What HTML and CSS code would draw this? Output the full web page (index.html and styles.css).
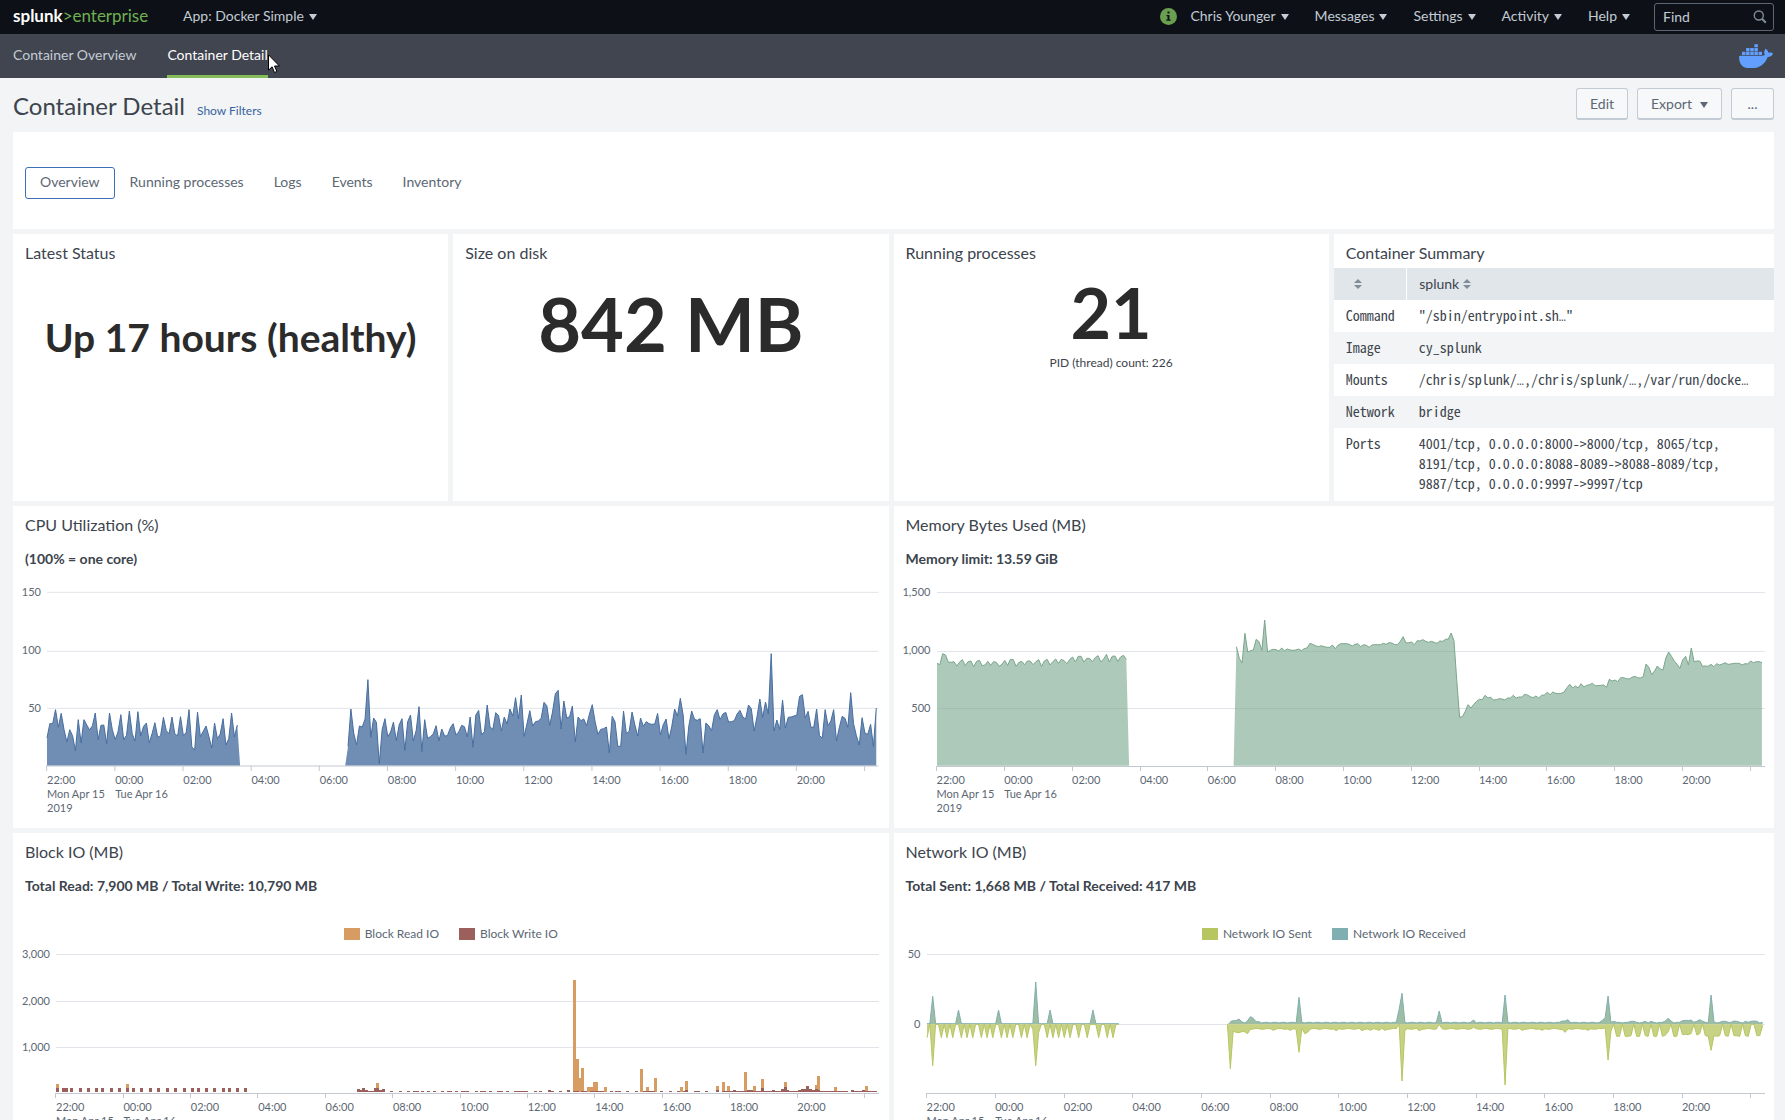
FILE: index.html
```html
<!DOCTYPE html>
<html lang="en">
<head>
<meta charset="utf-8">
<title>Container Detail</title>
<meta name="viewport" content="width=device-width, initial-scale=1">
<link rel="stylesheet" href="styles.css">
</head>
<body>
<header class="topbar">
  <a class="logo" href="#"><span class="logo-brand">splunk</span><span class="logo-product">&gt;enterprise</span></a>
  <button class="menu" type="button">App: Docker Simple<i class="caret"></i></button>
  <div class="topbar-right">
    <svg class="info" viewBox="0 0 17 17" aria-hidden="true"><circle cx="8.500" cy="8.500" r="8.500" fill="#6a9f50"/><path d="M7.500 3.500h2v2h-2zM6.500 7h3v4.500h1.200v1.200H6.300v-1.200h1.200V8.200h-1z" fill="#0d1117"/></svg>
    <button class="menu" type="button">Chris Younger<i class="caret"></i></button>
    <button class="menu" type="button">Messages<i class="caret"></i></button>
    <button class="menu" type="button">Settings<i class="caret"></i></button>
    <button class="menu" type="button">Activity<i class="caret"></i></button>
    <button class="menu" type="button">Help<i class="caret"></i></button>
    <div class="find">
      <input class="find-input" type="text" placeholder="Find" aria-label="Find">
      <svg class="find-icon" viewBox="0 0 14 14" aria-hidden="true"><circle cx="5.800" cy="5.500" r="4.500" fill="none" stroke="#818d99" stroke-width="1.400"/><path d="M9 8.800l3.800 4" stroke="#818d99" stroke-width="2"/></svg>
    </div>
  </div>
</header>
<nav class="appnav">
  <a class="appnav-link" href="#">Container Overview</a>
  <a class="appnav-link active" href="#" aria-current="page">Container Detail
    <svg class="pointer" viewBox="0 0 12 20" aria-hidden="true"><path d="M.5.8v15.400l3.600-3.400 2.400 5.700 2.400-1-2.400-5.500h4.900z" fill="#fff" stroke="#000"/></svg>
  </a>
  <svg class="docker" viewBox="0 3.300 24 17" role="img" aria-label="Docker"><path fill="#639fff" d="M13.983 11.078h2.119a.186.186 0 00.186-.185V9.006a.186.186 0 00-.186-.186h-2.119a.185.185 0 00-.185.185v1.888c0 .102.083.185.185.185m-2.954-5.430h2.118a.186.186 0 00.186-.186V3.574a.186.186 0 00-.186-.185h-2.118a.185.185 0 00-.185.185v1.888c0 .102.082.185.185.185m0 2.716h2.118a.187.187 0 00.186-.186V6.290a.186.186 0 00-.186-.185h-2.118a.185.185 0 00-.185.185v1.887c0 .102.082.185.185.186m-2.930 0h2.120a.186.186 0 00.184-.186V6.290a.185.185 0 00-.185-.185H8.100a.185.185 0 00-.185.185v1.887c0 .102.083.185.185.186m-2.964 0h2.119a.186.186 0 00.185-.186V6.290a.185.185 0 00-.185-.185H5.136a.186.186 0 00-.186.185v1.887c0 .102.084.185.186.186m5.893 2.715h2.118a.186.186 0 00.186-.185V9.006a.186.186 0 00-.186-.186h-2.118a.185.185 0 00-.185.185v1.888c0 .102.082.185.185.185m-2.930 0h2.120a.185.185 0 00.184-.185V9.006a.185.185 0 00-.184-.186h-2.120a.185.185 0 00-.184.185v1.888c0 .102.083.185.185.185m-2.964 0h2.119a.185.185 0 00.185-.185V9.006a.185.185 0 00-.184-.186h-2.120a.186.186 0 00-.186.186v1.887c0 .102.084.185.186.185m-2.920 0h2.120a.185.185 0 00.184-.185V9.006a.185.185 0 00-.184-.186h-2.120a.185.185 0 00-.184.185v1.888c0 .102.082.185.185.185M23.763 9.890c-.065-.051-.672-.510-1.954-.510-.338.001-.676.030-1.010.087-.248-1.700-1.653-2.530-1.716-2.566l-.344-.199-.226.327c-.284.438-.490.922-.612 1.430-.230.970-.090 1.882.403 2.661-.595.332-1.550.413-1.744.420H.751a.751.751 0 00-.750.748 11.376 11.376 0 00.692 4.062c.545 1.428 1.355 2.480 2.410 3.124 1.180.723 3.100 1.137 5.275 1.137.983.003 1.963-.086 2.930-.266a12.248 12.248 0 003.823-1.389c.980-.567 1.860-1.288 2.610-2.136 1.252-1.418 1.998-2.997 2.553-4.400h.221c1.372 0 2.215-.549 2.680-1.009.309-.293.550-.650.707-1.046l.098-.288Z"/></svg>
</nav>
<main class="dashboard">
  <div class="dash-head">
    <h1 class="dash-title">Container Detail</h1>
    <a class="filters" href="#">Show Filters</a>
    <div class="dash-actions">
      <button class="btn" type="button">Edit</button>
      <button class="btn" type="button">Export<i class="caret"></i></button>
      <button class="btn" type="button">...</button>
    </div>
  </div>

  <section class="panel tabs">
    <button class="tab selected" type="button">Overview</button>
    <button class="tab" type="button">Running processes</button>
    <button class="tab" type="button">Logs</button>
    <button class="tab" type="button">Events</button>
    <button class="tab" type="button">Inventory</button>
  </section>

  <div class="row quarters">
    <section class="panel">
      <h2 class="panel-title">Latest Status</h2>
      <p class="single single-status">Up 17 hours (healthy)</p>
    </section>
    <section class="panel">
      <h2 class="panel-title">Size on disk</h2>
      <p class="single single-size">842 MB</p>
    </section>
    <section class="panel">
      <h2 class="panel-title">Running processes</h2>
      <p class="single single-count">21</p>
      <p class="single-note">PID (thread) count: 226</p>
    </section>
    <section class="panel">
      <h2 class="panel-title">Container Summary</h2>
      <table class="summary">
        <thead><tr>
          <th class="summary-key" scope="col"><svg class="sort" viewBox="0 0 8 10" aria-label="Sort"><path d="M4 0l4 4H0zM4 10l4-4H0z" fill="#818d99"/></svg></th>
          <th scope="col">splunk <svg class="sort" viewBox="0 0 8 10" aria-hidden="true"><path d="M4 0l4 4H0zM4 10l4-4H0z" fill="#818d99"/></svg></th>
        </tr></thead>
        <tbody>
          <tr><td>Command</td><td>"/sbin/entrypoint.sh<span class="more">…</span>"</td></tr>
          <tr><td>Image</td><td>cy_splunk</td></tr>
          <tr><td>Mounts</td><td>/chris/splunk/<span class="more">…</span>,/chris/splunk/<span class="more">…</span>,/var/run/docke<span class="more">…</span></td></tr>
          <tr><td>Network</td><td>bridge</td></tr>
          <tr><td>Ports</td><td>4001/tcp, 0.0.0.0:8000-&gt;8000/tcp, 8065/tcp, 8191/tcp, 0.0.0.0:8088-8089-&gt;8088-8089/tcp, 9887/tcp, 0.0.0.0:9997-&gt;9997/tcp</td></tr>
        </tbody>
      </table>
    </section>
  </div>

  <div class="row halves">
    <section class="panel">
      <h2 class="panel-title">CPU Utilization (%)</h2>
      <p class="panel-sub">(100% = one core)</p>
      <div class="chart chart-area" data-chart="cpu">
        <div class="y-axis"><span>150</span><span>100</span><span>50</span></div>
      </div>
    </section>
    <section class="panel">
      <h2 class="panel-title">Memory Bytes Used (MB)</h2>
      <p class="panel-sub">Memory limit: 13.59 GiB</p>
      <div class="chart chart-area chart-memory" data-chart="memory">
        <div class="y-axis"><span>1,500</span><span>1,000</span><span>500</span></div>
      </div>
    </section>
  </div>

  <div class="row halves">
    <section class="panel">
      <h2 class="panel-title">Block IO (MB)</h2>
      <p class="panel-sub">Total Read: 7,900 MB / Total Write: 10,790 MB</p>
      <ul class="legend"><li class="key-read">Block Read IO</li><li class="key-write">Block Write IO</li></ul>
      <div class="chart chart-io chart-block" data-chart="block">
        <div class="y-axis"><span>3,000</span><span>2,000</span><span>1,000</span></div>
      </div>
    </section>
    <section class="panel">
      <h2 class="panel-title">Network IO (MB)</h2>
      <p class="panel-sub">Total Sent: 1,668 MB / Total Received: 417 MB</p>
      <ul class="legend"><li class="key-sent">Network IO Sent</li><li class="key-received">Network IO Received</li></ul>
      <div class="chart chart-io chart-network" data-chart="network">
        <div class="y-axis"><span>50</span><span>0</span></div>
      </div>
    </section>
  </div>
</main>
<script src="charts.js"></script>
</body>
</html>
```
FILE: styles.css
```css
* { box-sizing: border-box; }

html, body { height: 100%; }

body {
  margin: 0;
  display: flex;
  flex-direction: column;
  background: #f2f4f5;
  color: #3c444d;
  font: 14px/20px Lato, "Open Sans", sans-serif;
}

button, input { font: inherit; }
h1, h2, p, ul { margin: 0; padding: 0; font-weight: 400; }
a { text-decoration: none; }

.caret {
  display: inline-block;
  margin-left: 5px;
  border: 4px solid transparent;
  border-top: 6px solid currentColor;
  border-bottom: 0;
  vertical-align: 1px;
}

/* Splunk bar */
.topbar {
  flex: none;
  height: 34px;
  display: flex;
  align-items: center;
  padding: 0 11px 2px 13px;
  background: #0d1117;
}
.logo { width: 157px; font-size: 17px; white-space: nowrap; }
.logo-brand { color: #fff; font-weight: 700; }
.logo-product { color: #70b050; }
.menu {
  padding: 0 13px;
  border: 0;
  background: none;
  color: #c3cbd4;
}
.topbar-right { margin-left: auto; display: flex; align-items: center; }
.info { width: 17px; height: 17px; }
.find {
  width: 120px;
  height: 28px;
  margin: 2px 0 0 11px;
  padding: 0 6px 0 8px;
  display: flex;
  align-items: center;
  border: 1px solid #5c6773;
  border-radius: 3px;
}
.find-input {
  flex: 1;
  min-width: 0;
  padding: 0;
  border: 0;
  outline: 0;
  background: none;
  color: #c3cbd4;
}
.find-input::placeholder { color: #c3cbd4; opacity: 1; }
.find-icon { width: 14px; height: 14px; }

/* App navigation */
.appnav {
  flex: none;
  height: 44px;
  display: flex;
  align-items: center;
  gap: 31px;
  padding: 0 12px 0 13px;
  background: #41454f;
}
.appnav-link {
  position: relative;
  height: 44px;
  padding-top: 11px;
  color: #c3cbd4;
}
.appnav-link.active { color: #fff; border-bottom: 3px solid #84bd5a; }
.pointer { position: absolute; left: 100%; top: 20px; width: 12px; height: 20px; }
.docker { width: 34px; height: 24px; margin-left: auto; }

/* Dashboard */
.dashboard {
  flex: 1;
  min-height: 0;
  overflow-y: auto;
  scrollbar-width: none;
  padding: 10px 11px 20px 13px;
}
.dash-head { display: flex; align-items: flex-start; height: 44px; }
.dash-title { font-size: 24px; line-height: 36px; }
.filters { margin-left: 12px; padding-top: 14px; color: #3863a0; font-size: 12px; line-height: 18px; }
.dash-actions { margin-left: auto; display: flex; gap: 9px; }
.btn {
  height: 32px;
  min-width: 43px;
  padding: 0 13px;
  border: 1px solid #c3cbd4;
  border-bottom-width: 2px;
  border-radius: 3px;
  background: #f7f8fa;
  color: #5c6773;
}
.btn .caret { margin-left: 8px; }

.panel { background: #fff; min-width: 0; }
.tabs { display: flex; align-items: center; height: 97px; padding: 5px 12px 0; }
.tab {
  height: 32px;
  padding: 0 14px 2px;
  border: 1px solid transparent;
  border-radius: 3px;
  background: none;
  color: #5c6773;
}
.tab.selected { border-color: #3c6fb5; }

.row { display: flex; margin-top: 5px; gap: 5px; }
.quarters .panel { flex: 0 0 calc(25% - 5px); height: 267px; }
.halves .panel { flex: 0 0 calc(50% - 5px); height: 322px; }
.row .panel:last-child { flex: 1; }
.panel-title { padding: 9px 12px 5px; font-size: 16px; line-height: 20px; }
.panel-sub { padding: 9px 12px 0; font-weight: 700; line-height: 20px; }

.single { text-align: center; font-weight: 700; color: #2b2b2b; white-space: nowrap; }
.single-status { padding-top: 45px; font-size: 39px; line-height: 48px; }
.single-size { padding-top: 16px; font-size: 74px; line-height: 80px; }
.single-count { padding-top: 4px; font-size: 70px; line-height: 80px; }
.single-note { padding-top: 2px; text-align: center; font-size: 12px; line-height: 18px; }

.summary { width: 100%; border-collapse: collapse; table-layout: fixed; }
.summary th {
  height: 32px;
  padding: 0 12px 1px;
  background: #e1e6eb;
  font-weight: 400;
  text-align: left;
}
.summary .summary-key { width: 73px; padding-left: 20px; border-right: 1px solid #fff; }
.summary td {
  padding: 5px 12px 7px;
  font: 14px/20px "Noto Sans Mono CJK SC", "Liberation Mono", monospace;
  vertical-align: top;
}
.summary tbody tr:nth-child(even) { background: #f2f4f5; }
.more { font: 12px/1 "Liberation Mono", monospace; }
.sort { width: 8px; height: 10px; }

/* Charts: labels in the left column, plot and time axis in the right one */
.chart {
  display: grid;
  grid-template-columns: 22px 1fr;
  padding: 0 10px 0 6px;
  column-gap: 6px;
  color: #5c6773;
  font-size: 11px;
  line-height: 14px;
}
.chart-area { padding-top: 16px; }
.y-axis {
  display: flex;
  flex-direction: column;
  justify-content: space-between;
  text-align: right;
  white-space: nowrap;
}
.chart-area .y-axis { height: 130px; }
.chart-io .y-axis { height: 107px; }
.chart-network .y-axis { height: 84px; }
.chart-memory, .chart-block { grid-template-columns: 31px 1fr; }
.chart-network { grid-template-columns: 21px 1fr; }
.plot { display: block; width: 100%; margin-top: 7px; overflow: visible; }
.chart-area .plot { height: 179px; }
.chart-io .plot { height: 144px; }
.plot path, .plot line { vector-effect: non-scaling-stroke; }
.x-axis { grid-column: 2; display: flex; padding-top: 2px; overflow: hidden; }
.x-axis span { flex: none; white-space: pre-line; }

.legend {
  display: flex;
  justify-content: center;
  gap: 20px;
  padding: 30px 0 5px;
  list-style: none;
  color: #5c6773;
  font-size: 12px;
  line-height: 16px;
}
.legend li { display: flex; align-items: center; gap: 5px; }
.legend li::before { content: ""; width: 16px; height: 12px; }
.legend .key-read::before { background: #d69c61; }
.legend .key-write::before { background: #9b5f5c; }
.legend .key-sent::before { background: #b8c661; }
.legend .key-received::before { background: #7fafb0; }
```
FILE: charts.js
```js
/* Samples are five minutes apart; all sizes are in thirds of a pixel at the default width. */
const NS = 'http://www.w3.org/2000/svg';
const LABELS = ['22:00\nMon Apr 15\n2019', '00:00\nTue Apr 16', '02:00', '04:00', '06:00', '08:00',
  '10:00', '12:00', '14:00', '16:00', '18:00', '20:00'];

const cpu = [
  [0, [83,126,126,168,115,157,108,71,108,90,45,138,68,138,122,107,120,158,78,121,122,66,158,108,78,101,153,78,91,164,96,74,162,89,118,128,69,96,129,85,90,145,105,96,146,96,89,147,91,98,168,56,47,161,87,103,119,88,53,128,81,95,141,62,81,158,86,122,0]],
  [105, [0,58,170,98,62,119,116,140,258,85,143,130,6,108,141,87,101,131,75,122,141,46,132,152,74,106,177,42,138,82,87,95,120,74,110,89,90,113,126,92,102,121,117,86,146,55,152,166,93,102,182,116,109,159,150,104,146,125,170,149,204,141,212,88,125,165,119,132,134,142,190,180,121,161,216,226,110,194,143,147,179,71,146,135,140,120,155,183,132,94,109,111,116,38,148,132,58,58,164,96,103,161,122,89,143,118,132,126,124,125,157,92,123,140,80,118,170,149,202,152,34,120,164,139,136,141,38,128,120,105,153,168,138,155,160,131,132,135,155,166,146,140,182,171,104,147,200,145,191,155,336,104,137,109,197,113,145,146,149,151,208,213,143,163,115,116,170,90,83,168,120,134,168,74,115,148,142,115,219,126,90,62,144,98,94,124,58,173]]
];

const memory = [
  [0, [307,303,336,332,311,310,312,299,311,318,300,312,314,297,313,316,300,302,313,301,312,310,298,304,316,301,319,318,298,310,313,303,314,314,303,312,318,298,314,319,302,312,320,307,319,315,306,319,326,311,328,328,311,322,322,312,324,330,311,320,334,311,328,329,313,326,331,319,0]],
  [105, [0,357,322,308,397,341,345,347,379,372,346,437,341,346,349,348,344,353,345,350,347,346,347,350,345,351,353,367,364,360,357,360,357,355,355,362,351,362,366,366,366,364,359,364,366,357,363,361,355,362,363,363,363,367,364,369,368,363,363,373,387,368,369,371,363,375,374,378,373,370,373,370,367,374,373,379,380,398,375,255,145,147,163,183,173,184,193,199,198,211,203,205,197,198,201,200,197,203,203,211,203,206,206,214,212,207,204,209,203,211,212,220,213,221,217,216,217,221,234,244,233,239,233,246,236,241,243,247,240,240,241,242,235,259,254,257,252,264,264,261,260,265,268,264,263,267,305,295,273,284,299,290,287,323,341,328,314,304,292,318,328,302,353,312,314,314,298,299,298,304,297,306,302,305,309,304,305,307,307,307,302,306,305,314,309,312,312,309]]
];

/* Bars: [x, width, height] */
const blockRead = [[0,9,24],[210,9,24],[960,9,27],
  ...[[399,9,336],[408,9,99],[417,6,42],[423,9,72],[441,18,15],[459,15,30],[492,9,15],[600,9,69],[618,9,15],[642,9,42],[720,9,15],[735,9,33],[828,9,18],[846,9,30],[861,9,18],[912,9,60],[939,9,18],[963,9,39],[1032,9,30],[1125,6,21],[1131,9,48],[1182,9,15],[1275,9,18]].map(([x, w, h]) => [x + 1152, w, h])];
const blockWrite = [
  ...[168,186,195,210,237,261,285,303,330,354,378,396,420,447,471,498,522,549,573,591,615,639,666,684,708,732].map(x => [x - 168, 9, 12]),
  ...[[1071,9,9],[1080,6,6],[1086,9,12],[1095,9,6],[1104,18,3],[1122,15,12],[1137,9,6],[1146,9,9],[1170,9,3],[1197,9,3],[1221,9,3],[1239,18,3],[1263,9,3],[1281,9,3],[1299,9,3],[1323,9,3],[1341,15,3]].map(([x, w, h]) => [x - 168, w, h]),
  ...[[21,15,3],[45,9,3],[63,24,3],[105,9,3],[120,18,3],[147,9,3],[171,18,3],[198,9,3],[222,42,3],[282,9,3],[297,9,3],[324,9,6],[333,9,3],[357,9,3],[381,9,6],[399,18,3],[423,18,3],[450,42,3],[510,9,3],[525,18,3],[558,9,3],[585,9,3],[609,36,3],[660,9,3],[687,9,3],[711,9,3],[729,6,3],[735,9,6],[762,18,3],[795,9,3],[828,9,6],[846,33,3],[879,9,6],[888,33,3],[921,18,6],[939,24,3],[963,9,12],[972,24,3],[996,9,6],[1005,18,3],[1023,9,9],[1032,9,15],[1041,6,6],[1047,27,3],[1074,9,6],[1083,15,9],[1098,9,18],[1107,9,9],[1116,9,6],[1125,9,9],[1134,6,6],[1140,84,3],[1233,9,6],[1242,24,3],[1266,9,6],[1275,36,3]].map(([x, w, h]) => [x + 1152, w, h])
];

/* A quiet series from..to with the given samples replaced */
function quiet(from, to, base, samples) {
  const values = [];
  for (let i = from; i <= to; i++) values.push(i in samples ? samples[i] : base[i % base.length]);
  return [from, values];
}
const sentEarly = {2: 124, 38: 124, 37: 15, 39: 25};
[0,5,7,9,12,14,16,19,21,23,26,28,30,33,35,42,44,46,48,50,53,56,60,63,65].forEach(i => { sentEarly[i] = 40; });
const received = [
  quiet(0, 67, [2], {2: 84, 11: 43, 25: 43, 38: 127, 43: 43, 58: 43}),
  quiet(105, 292, [4, 6, 6], {105: 0, 106: 8, 107: 11, 108: 11, 109: 16, 110: 8, 112: 10, 113: 23, 114: 18, 115: 8, 116: 8, 130: 81, 165: 45, 166: 93, 179: 40, 191: 13, 202: 88, 222: 10, 223: 10, 224: 14, 236: 12, 237: 20, 238: 85, 240: 9, 246: 9, 247: 9, 251: 9, 253: 9, 258: 10, 259: 18, 260: 10, 264: 11, 265: 12, 266: 11, 267: 13, 269: 9, 270: 14, 271: 9, 274: 88, 275: 8, 278: 9, 279: 9, 282: 10, 283: 9, 286: 9, 288: 9, 289: 10, 290: 9})
];
const sent = [
  quiet(0, 67, [0], sentEarly),
  quiet(105, 292, [13, 15, 14, 12], {105: 0, 106: 133, 107: 20, 108: 24, 109: 25, 110: 22, 111: 22, 112: 28, 121: 18, 127: 18, 130: 84, 132: 28, 133: 24, 143: 19, 152: 19, 155: 18, 158: 18, 160: 18, 165: 0, 166: 170, 167: 18, 172: 19, 179: 0, 191: 9, 202: 182, 208: 18, 215: 18, 222: 16, 223: 24, 231: 18, 237: 10, 238: 107, 239: 20,
    240: 0, 241: 36, 242: 36, 243: 0, 244: 36, 245: 36, 246: 34, 247: 0, 248: 36, 249: 36, 250: 0, 251: 34, 252: 36, 253: 0, 254: 36, 255: 36, 256: 0, 257: 36, 258: 33, 259: 22, 260: 0, 261: 36, 262: 36, 263: 0, 264: 31, 265: 30, 266: 31, 267: 28, 268: 0, 269: 32, 270: 28, 271: 0, 272: 34, 273: 36, 274: 78, 275: 34, 276: 36, 277: 34, 278: 0, 279: 34, 280: 36, 281: 0, 282: 34, 283: 34, 284: 36, 285: 0, 286: 34, 287: 36, 288: 0, 289: 0, 290: 34, 291: 34, 292: 4})
];

const CHARTS = {
  cpu: {width: 2496, base: 521, height: 537, step: 8.525, grid: [1, 178, 349],
    areas: [{data: cpu, zero: 521, fill: '#708db3', stroke: '#476e9f'}]},
  memory: {width: 2484, base: 521, height: 537, step: 8.48, grid: [1, 178, 349],
    areas: [{data: memory, zero: 521, fill: 'rgba(122,168,142,.62)', stroke: '#7ba68c'}]},
  block: {width: 2469, base: 416, height: 432, step: 8.43, grid: [1, 142, 280],
    bars: [{data: blockRead, fill: '#d69c61'}, {data: blockWrite, fill: '#9b5f5c'}]},
  network: {width: 2514, base: 416, height: 432, step: 8.59, grid: [1, 211],
    areas: [{data: received, zero: 211, fill: '#9fbda2', stroke: '#7fafb0'},
      {data: sent, zero: 211, down: true, fill: '#c8d285', stroke: '#b8c661'}]}
};

function add(parent, name, attrs) {
  const el = document.createElementNS(NS, name);
  for (const key in attrs) el.setAttribute(key, attrs[key]);
  parent.appendChild(el);
}

document.querySelectorAll('.chart').forEach(box => {
  const c = CHARTS[box.dataset.chart];
  const svg = document.createElementNS(NS, 'svg');
  svg.setAttribute('class', 'plot');
  svg.setAttribute('viewBox', `0 0 ${c.width} ${c.height}`);
  svg.setAttribute('preserveAspectRatio', 'none');
  c.grid.forEach(y => add(svg, 'line', {x1: 0, x2: c.width, y1: y, y2: y, stroke: '#e1e4e9', 'shape-rendering': 'crispEdges'}));
  (c.areas || []).forEach(a => a.data.forEach(([from, values]) => {
    const pts = values.map((v, i) => `${((from + i) * c.step).toFixed(1)} ${a.zero + (a.down ? v : -v)}`);
    const x1 = (from * c.step).toFixed(1), x2 = ((from + values.length - 1) * c.step).toFixed(1);
    add(svg, 'path', {d: `M${x1} ${a.zero}L${pts.join('L')}L${x2} ${a.zero}z`, fill: a.fill});
    const line = values.map((v, i) => [v, pts[i]]).filter(p => p[0] > 0 || a.down).map(p => p[1]);
    add(svg, 'path', {d: `M${line.join('L')}`, fill: 'none', stroke: a.stroke});
  }));
  (c.bars || []).forEach(b => {
    add(svg, 'path', {d: b.data.map(([x, w, h]) => `M${x} ${c.base - 2}v${-h}h${w}v${h}z`).join(''), fill: b.fill, 'shape-rendering': 'crispEdges'});
  });
  add(svg, 'line', {x1: -3, x2: c.width, y1: c.base + 1, y2: c.base + 1, stroke: '#c3c8d2', 'shape-rendering': 'crispEdges'});
  for (let i = 0; i <= 12; i++) {
    const x = i * 24 * c.step - 1;
    add(svg, 'line', {x1: x, x2: x, y1: c.base, y2: c.height, stroke: '#c3c8d2', 'shape-rendering': 'crispEdges'});
  }
  box.appendChild(svg);

  const axis = document.createElement('div');
  axis.className = 'x-axis';
  LABELS.forEach(text => {
    const label = document.createElement('span');
    label.style.width = 100 * 24 * c.step / c.width + '%';
    label.textContent = text;
    axis.appendChild(label);
  });
  box.appendChild(axis);
});
```
